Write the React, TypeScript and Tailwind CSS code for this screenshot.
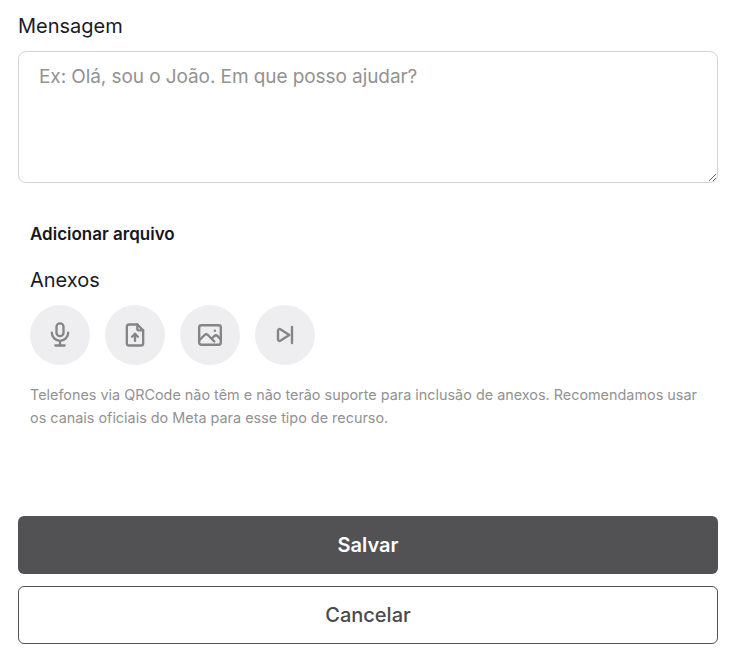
const iconClass = 'text-[#858585]';

function MicIcon() {
  return (
    <svg width="28" height="28" viewBox="0 0 24 24" fill="none" stroke="currentColor" strokeWidth="2" strokeLinecap="round" strokeLinejoin="round" className={iconClass}>
      <path d="M9 5a3 3 0 0 1 6 0v5a3 3 0 0 1 -6 0z" />
      <path d="M5 10a7 7 0 0 0 14 0" />
      <path d="M8 21h8" />
      <path d="M12 17v4" />
    </svg>
  );
}

function FileUploadIcon() {
  return (
    <svg width="28" height="28" viewBox="0 0 24 24" fill="none" stroke="currentColor" strokeWidth="2" strokeLinecap="round" strokeLinejoin="round" className={iconClass}>
      <path d="M14 3v4a1 1 0 0 0 1 1h4" />
      <path d="M17 21h-10a2 2 0 0 1 -2 -2v-14a2 2 0 0 1 2 -2h7l5 5v11a2 2 0 0 1 -2 2z" />
      <path d="M12 17v-6" />
      <path d="M9.5 13.5l2.5 -2.5l2.5 2.5" />
    </svg>
  );
}

function PhotoIcon() {
  return (
    <svg width="26" height="26" viewBox="0 0 24 24" fill="none" stroke="currentColor" strokeWidth="2.2" strokeLinecap="round" strokeLinejoin="round" className={iconClass}>
      <rect x="2" y="3" width="20" height="18" rx="2" />
      <path d="M16.5 8h.01" />
      <path d="M2 17l5 -5c1 -1 2 -1 3 0l6 6" />
      <path d="M14 15l2 -2c1 -1 2 -1 3 0l3 3" />
    </svg>
  );
}

function NextIcon() {
  return (
    <svg width="24" height="24" viewBox="0 0 24 24" fill="none" stroke="currentColor" strokeWidth="2.4" strokeLinecap="round" strokeLinejoin="round" className={iconClass}>
      <path d="M19 4v16" />
      <path d="M5 7.5a1.5 1.5 0 0 1 2.3 -1.2l9 5.7l-9 5.7a1.5 1.5 0 0 1 -2.3 -1.2z" />
    </svg>
  );
}

export default function App() {
  return (
    <div className="h-[655px] w-[736px] overflow-hidden bg-white px-[18px] font-['Inter',sans-serif]">
      <label className="block pt-[13px] text-[20px] leading-[26px] text-[#1a1a24]">Mensagem</label>
      <textarea
        placeholder="Ex: Olá, sou o João. Em que posso ajudar?"
        className="mt-[12px] block h-[132px] w-[700px] rounded-lg border border-[#d4d4d4] px-5 py-[11px] text-[19px] leading-[28px] tracking-[-0.08px] outline-none placeholder:text-[#929292]"
      />

      <div className="px-3">
        <h3 className="mt-[40px] text-[17px] font-semibold leading-[22px] text-[#16161d]">Adicionar arquivo</h3>
        <p className="mt-[22px] text-[20px] leading-[26px] text-[#1a1a24]">Anexos</p>
        <div className="mt-[12px] flex gap-[15px]">
          <button className="flex h-[60px] w-[60px] items-center justify-center rounded-full bg-[#eeeef0]"><MicIcon /></button>
          <button className="flex h-[60px] w-[60px] items-center justify-center rounded-full bg-[#eeeef0]"><FileUploadIcon /></button>
          <button className="flex h-[60px] w-[60px] items-center justify-center rounded-full bg-[#eeeef0]"><PhotoIcon /></button>
          <button className="flex h-[60px] w-[60px] items-center justify-center rounded-full bg-[#eeeef0]"><NextIcon /></button>
        </div>
        <p className="mt-[18px] w-[676px] text-[14.4px] leading-[23px] text-[#929292]">
          Telefones via QRCode não têm e não terão suporte para inclusão de anexos. Recomendamos usar os canais oficiais do Meta para esse tipo de recurso.
        </p>
      </div>

      <button className="mt-[87px] block h-[58px] w-[700px] rounded-md bg-[#525254] text-[20px] font-semibold text-white">Salvar</button>
      <button className="mt-[12px] block h-[58px] w-[700px] rounded-md border border-[#525254] bg-white text-[20px] font-medium text-[#4a4a4c]">Cancelar</button>
    </div>
  );
}
